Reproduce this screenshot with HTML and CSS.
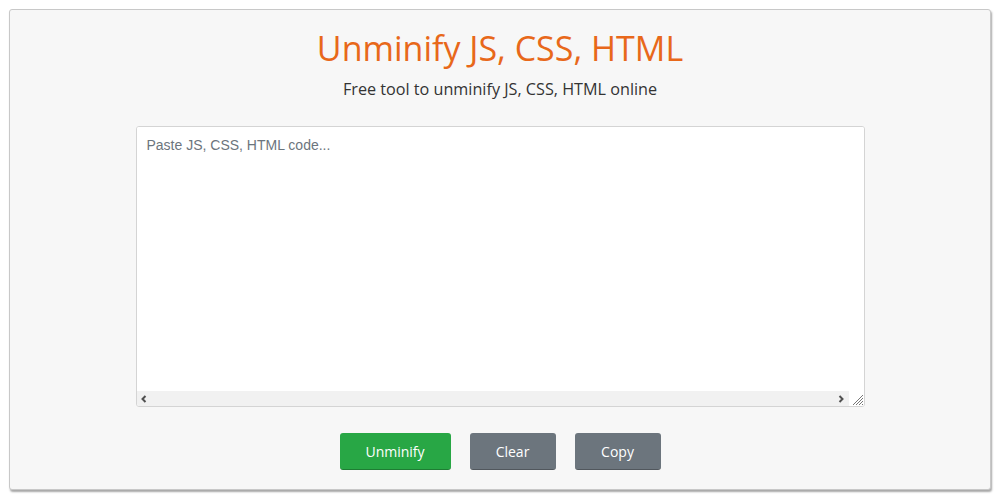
FILE: index.html
```html
<!DOCTYPE html>
<html lang="en">
<head>
    <meta charset="UTF-8">
    <meta name="viewport" content="width=device-width, initial-scale=1.0">
    <title>Unminify JS, CSS, HTML</title>
    <link rel="stylesheet" href="styles.css">
</head>
<body>

<div class="card">
    <h1>Unminify JS, CSS, HTML</h1>
    <p class="subtitle">Free tool to unminify JS, CSS, HTML online</p>

    <div class="editor">
        <textarea id="code" wrap="off" placeholder="Paste JS, CSS, HTML code..."></textarea>
        <div class="hscroll">
            <span class="arrow">
                <svg width="8" height="8" viewBox="0 0 8 8"><path d="M5.5 1 L2.5 4 L5.5 7" fill="none" stroke="#505050" stroke-width="2"/></svg>
            </span>
            <span class="track"></span>
            <span class="arrow">
                <svg width="8" height="8" viewBox="0 0 8 8"><path d="M2.5 1 L5.5 4 L2.5 7" fill="none" stroke="#505050" stroke-width="2"/></svg>
            </span>
            <span class="grip">
                <svg width="14" height="14" viewBox="0 0 14 14"><path d="M13 3 L3 13 M13 6 L6 13 M13 9 L9 13 M13 12 L12 13" stroke="#777" stroke-width="1"/></svg>
            </span>
        </div>
    </div>

    <div class="actions">
        <button class="btn btn-green" id="unminify">Unminify</button>
        <button class="btn btn-gray" id="clear">Clear</button>
        <button class="btn btn-gray" id="copy">Copy</button>
    </div>
</div>

</body>
</html>
```

FILE: styles.css
```css
body {
    font-family: "Open Sans", sans-serif;
    background-color: #fff;
    margin: 0;
    padding: 9px 9px 8px 9px;
}
.card {
    background-color: #f7f7f7;
    border: 1px solid #c8c8c8;
    border-radius: 3px;
    box-shadow: 1px 2px 2px rgba(0, 0, 0, 0.35);
    height: 481px;
    box-sizing: border-box;
    padding-top: 15px;
}
h1 {
    text-align: center;
    color: #e8681a;
    font-weight: 400;
    font-size: 34px;
    margin: 0;
    line-height: 46px;
}
.subtitle {
    text-align: center;
    color: #333;
    font-size: 16.2px;
    margin: 6px 0 0;
    line-height: 24px;
}
.editor {
    width: 729px;
    height: 281px;
    margin: 25px auto 0;
    box-sizing: border-box;
    border: 1px solid #d4d4d4;
    border-radius: 3px;
    background-color: #fff;
    display: flex;
    flex-direction: column;
    overflow: hidden;
}
.editor textarea {
    flex: 1;
    display: block;
    width: 100%;
    box-sizing: border-box;
    padding: 10px 10px 8px;
    border: none;
    outline: none;
    background-color: #fff;
    font-family: "Liberation Sans", Arial, sans-serif;
    font-size: 14px;
    color: #333;
    overflow: hidden;
    resize: none;
}
.editor textarea::placeholder {
    color: #6c757d;
}
.hscroll {
    display: flex;
    height: 15px;
    background-color: #f1f1f1;
}
.hscroll .arrow {
    width: 15px;
    display: flex;
    align-items: center;
    justify-content: center;
}
.hscroll .track {
    flex: 1;
}
.hscroll .grip {
    width: 15px;
    background-color: #fff;
    display: flex;
    align-items: flex-end;
    justify-content: flex-end;
}
.actions {
    display: flex;
    justify-content: center;
    gap: 19px;
    margin-top: 26px;
}
.btn {
    height: 37px;
    border: none;
    border-radius: 3px;
    color: #fff;
    font-family: "Open Sans", sans-serif;
    font-size: 14px;
    cursor: pointer;
    border-bottom: 1px solid rgba(0, 0, 0, 0.25);
}
.btn-green {
    width: 111px;
    background-color: #28a745;
}
.btn-gray {
    width: 86px;
    background-color: #6c757d;
}
```
